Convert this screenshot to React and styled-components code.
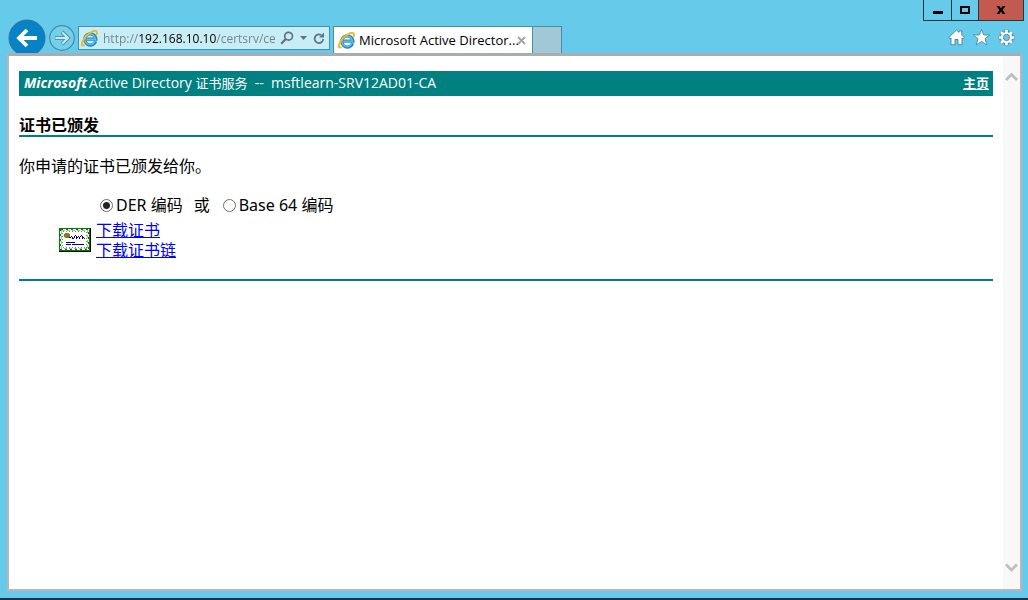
import React, { useState } from 'react';
import styled, { createGlobalStyle, ThemeProvider } from 'styled-components';

const theme = {
  colors: {
    chrome: '#66caea',
    chromeBorder: '#4590a4',
    field: '#c9edf7',
    frame: '#b9b5ba',
    teal: '#008080',
    link: '#0000ff',
    close: '#c35a50',
  },
  fonts: {
    page: '"Noto Sans", "Noto Sans CJK SC", sans-serif',
    ui: '"Open Sans", "Noto Sans CJK SC", sans-serif',
  },
};

const GlobalStyle = createGlobalStyle`
  * {
    box-sizing: border-box;
  }

  body {
    margin: 0;
    font-family: ${({ theme }) => theme.fonts.page};
    font-size: 16px;
    color: #000;
  }

  button {
    padding: 0;
    border: 0;
    background: none;
    font: inherit;
  }

  svg {
    display: block;
  }
`;

const Window = styled.div`
  display: flex;
  flex-direction: column;
  height: 100vh;
  background-color: ${({ theme }) => theme.colors.chrome};
  border-bottom: 2px solid #2b2d3c;
`;

const Header = styled.header`
  display: flex;
  justify-content: space-between;
  height: 53px;
  padding: 0 4px 0 8px;
`;

const NavBar = styled.div`
  display: flex;
  align-items: flex-start;
  padding-top: 26px;
`;

const BackButton = styled.button`
  width: 38px;
  height: 38px;
  margin-top: -7px;
`;

const ForwardButton = styled.button`
  width: 26px;
  height: 26px;
  margin: -1px 3px 0;
`;

const AddressBar = styled.form`
  display: flex;
  align-items: center;
  width: 252px;
  height: 24px;
  padding: 0 2px;
  border: 1px solid ${({ theme }) => theme.colors.chromeBorder};
  background-color: ${({ theme }) => theme.colors.field};
`;

/* the host part of the address is darker than the rest */
const UrlInput = styled.input`
  flex: 1;
  min-width: 0;
  height: 22px;
  margin: 0 4px 0 5px;
  padding: 0;
  border: 0;
  outline: 0;
  font-family: ${({ theme }) => theme.fonts.ui};
  font-size: 12px;
  color: transparent;
  background: linear-gradient(
    to right,
    #6f8289 35px,
    #000 35px,
    #000 113px,
    #6f8289 113px
  );
  background-clip: text;
  -webkit-background-clip: text;
`;

const FieldButton = styled.button`
  display: flex;
  align-items: center;
  justify-content: center;
  width: 16px;
  height: 22px;
`;

const Tab = styled.div`
  display: flex;
  align-items: center;
  width: 200px;
  height: 27px;
  margin-left: 3px;
  padding: 0 6px 0 4px;
  border: 1px solid ${({ theme }) => theme.colors.chromeBorder};
  border-bottom: 0;
  background-color: #fff;
`;

const TabTitle = styled.span`
  flex: 1;
  min-width: 0;
  margin-left: 4px;
  font-family: ${({ theme }) => theme.fonts.ui};
  font-size: 13px;
  white-space: nowrap;
`;

const NewTab = styled.button`
  width: 29px;
  height: 27px;
  border: 1px solid ${({ theme }) => theme.colors.chromeBorder};
  border-width: 1px 1px 0 0;
  background-color: #a1c8d5;
`;

const Tools = styled.div`
  display: flex;
  flex-direction: column;
  align-items: flex-end;
  gap: 8px;
`;

const WindowControls = styled.div`
  display: flex;
  height: 21px;
  border: 1px solid #23383f;
  border-top: 0;
`;

const WindowButton = styled.button`
  display: flex;
  align-items: center;
  justify-content: center;
  width: ${({ $close }) => ($close ? 45 : 27)}px;
  background-color: ${({ theme, $close }) => ($close ? theme.colors.close : 'transparent')};

  & + & {
    border-left: 1px solid #23383f;
  }
`;

const ToolIcons = styled.div`
  display: flex;
  gap: 8px;
  padding-right: 9px;
`;

const Frame = styled.div`
  display: flex;
  flex: 1;
  min-height: 0;
  margin: 0 6px 7px 7px;
  border: 2px solid ${({ theme }) => theme.colors.frame};
  border-top: 3px solid #a9adb3;
  background-color: #fff;
`;

const Page = styled.main`
  flex: 1;
  min-width: 0;
  padding: 15px 10px;
`;

const ScrollTrack = styled.div`
  display: flex;
  flex-direction: column;
  justify-content: space-between;
  width: 17px;
  padding: 16px 0;
  background-color: #f8f8f8;
`;

const ScrollButton = styled.button`
  display: flex;
  justify-content: center;
`;

const Banner = styled.div`
  display: flex;
  align-items: center;
  justify-content: space-between;
  height: 25px;
  padding: 0 4px 2px 5px;
  background-color: ${({ theme }) => theme.colors.teal};
  color: #fff;
  font-family: ${({ theme }) => theme.fonts.ui};
  font-size: 13px;
  white-space: pre;
`;

const Product = styled.span`
  font-size: 14px;
  line-height: 20px;
`;

const Brand = styled.b`
  margin-right: 2px;
  font-style: italic;
`;

const Service = styled.span`
  font-size: 13px;
`;

const HomeLink = styled.a`
  color: #fff;
  font-weight: bold;
`;

const Heading = styled.h1`
  margin: 19px 0 0;
  font-size: 16px;
  line-height: 20px;
`;

const Rule = styled.hr`
  height: 2px;
  margin: 0;
  border: 0;
  background-color: ${({ theme }) => theme.colors.teal};
`;

const Message = styled.p`
  margin: 19px 0;
  line-height: 20px;
`;

const Download = styled.div`
  display: grid;
  grid-template-columns: 32px 1fr;
  column-gap: 5px;
  row-gap: 5px;
  align-items: center;
  margin-bottom: 19px;
  padding-left: 40px;
`;

const Encoding = styled.div`
  display: flex;
  grid-column: 2;
  align-items: center;
  padding-left: 4px;
  line-height: 20px;
`;

const Option = styled.label`
  display: flex;
  align-items: center;
`;

const Radio = styled.input`
  appearance: none;
  width: 13px;
  height: 13px;
  margin: 0 3px 0 0;
  border: 1px solid #707070;
  border-radius: 50%;
  background-color: #fff;

  &:checked {
    background-image: radial-gradient(circle, #222 3px, transparent 4px);
  }
`;

const Or = styled.span`
  margin: 0 13px 0 11px;
`;

const Links = styled.div`
  display: flex;
  flex-direction: column;
  align-items: flex-start;
  line-height: 20px;
`;

const PageLink = styled.a`
  color: ${({ theme }) => theme.colors.link};
`;

const BackIcon = () => (
  <svg width="38" height="38" viewBox="0 0 38 38">
    <circle cx="19" cy="19" r="18" fill="#0683c6" stroke="#39728c" strokeWidth="1" />
    <path d="M29 19H11.5M19 11L11 19L19 27" fill="none" stroke="#fff" strokeWidth="3.8" />
  </svg>
);

const ForwardIcon = () => (
  <svg width="26" height="26" viewBox="0 0 26 26">
    <circle cx="13" cy="13" r="12.3" fill="#76cfea" stroke="#438da5" strokeWidth="1.2" />
    <path d="M6 13H19M13 7L19 13L13 19" fill="none" stroke="#4a97af" strokeWidth="4" />
    <path d="M6.5 13H19M13.4 7.5L18.9 13L13.4 18.5" fill="none" stroke="#c7eef8" strokeWidth="2" />
  </svg>
);

const BrowserLogo = () => (
  <svg width="17" height="17" viewBox="0 0 17 17">
    <path
      d="M14.6 11.3A5.6 5.6 0 1 1 14.9 9.1H5.5"
      fill="none"
      stroke="#2a86c0"
      strokeWidth="3.2"
    />
    <path
      d="M14 11.3A5.3 5.3 0 1 1 14.4 9.2H5.5"
      fill="none"
      stroke="#5dbdea"
      strokeWidth="1.5"
    />
    <path
      d="M3.6 15.2C-0.9 17.2 0.4 11.2 5.2 6C10 1 15.6-0.6 15.9 2.2C16 3.1 15.8 4 15.2 5"
      fill="none"
      stroke="#f0b91f"
      strokeWidth="1.9"
    />
  </svg>
);

const SearchIcon = () => (
  <svg width="14" height="14" viewBox="0 0 14 14">
    <circle cx="8.6" cy="5.2" r="3.9" fill="none" stroke="#5e757e" strokeWidth="1.7" />
    <path d="M5.8 8L1.2 12.8" stroke="#5e757e" strokeWidth="2.2" />
  </svg>
);

const CaretIcon = () => (
  <svg width="7" height="4" viewBox="0 0 7 4">
    <path d="M0 0H7L3.5 4Z" fill="#5e757e" />
  </svg>
);

const ReloadIcon = () => (
  <svg width="12" height="13" viewBox="0 0 12 13">
    <path d="M8.2 3.1A4.3 4.3 0 1 0 10.2 7" fill="none" stroke="#5e757e" strokeWidth="1.8" />
    <path d="M6 5.5H11V0.5Z" fill="#5e757e" />
  </svg>
);

const TabCloseIcon = () => (
  <svg width="9" height="9" viewBox="0 0 9 9">
    <path d="M1 1L8 8M8 1L1 8" stroke="#a6a6a6" strokeWidth="2" />
  </svg>
);

const MinimizeIcon = () => (
  <svg width="10" height="9" viewBox="0 0 10 9">
    <path d="M0 5H10V8H0Z" />
  </svg>
);

const MaximizeIcon = () => (
  <svg width="10" height="8" viewBox="0 0 10 8">
    <path d="M1 1H9V7H1Z" fill="none" stroke="#000" strokeWidth="2" />
  </svg>
);

const CloseIcon = () => (
  <svg width="10" height="8" viewBox="0 0 10 8">
    <path d="M0.5 0H3.4L5 2.4L6.6 0H9.5L6.6 4L9.5 8H6.6L5 5.6L3.4 8H0.5L3.4 4Z" />
  </svg>
);

const HomeIcon = () => (
  <svg width="17" height="17" viewBox="0 0 17 17">
    <path
      d="M8.5 1L11 3.4V2H13.8V6.1L16.2 8.5L14.9 9.7L14 9V15.8H10V10.5H7V15.8H3V9L2.1 9.7L0.8 8.5Z"
      fill="#fff"
      stroke="#447f93"
      strokeWidth="0.9"
    />
  </svg>
);

const StarIcon = () => (
  <svg width="17" height="17" viewBox="0 0 17 17">
    <path
      d="M8.5 0.6L10.7 6H16.6L12 9.7L13.8 15.9L8.5 12.4L3.2 15.9L5 9.7L0.4 6H6.3Z"
      fill="#fff"
      stroke="#447f93"
      strokeWidth="0.8"
    />
  </svg>
);

const GearIcon = () => (
  <svg width="17" height="17" viewBox="0 0 17 17">
    <g stroke="#447f93" strokeWidth="4">
      <path d="M8.5 0.5V16.5M0.5 8.5H16.5M2.8 2.8L14.2 14.2M14.2 2.8L2.8 14.2" />
    </g>
    <circle cx="8.5" cy="8.5" r="4.7" fill="none" stroke="#447f93" strokeWidth="3.6" />
    <g stroke="#fff" strokeWidth="2.6">
      <path d="M8.5 0.8V16.2M0.8 8.5H16.2M3 3L14 14M14 3L3 14" />
    </g>
    <circle cx="8.5" cy="8.5" r="4.4" fill="#66caea" stroke="#fff" strokeWidth="2.4" />
    <circle cx="8.5" cy="8.5" r="3.1" fill="none" stroke="#447f93" strokeWidth="0.8" />
  </svg>
);

const ChevronIcon = ({ down }) => (
  <svg width="13" height="10" viewBox="0 0 13 10">
    <path
      d={down ? 'M1 1.5L6.5 7L12 1.5' : 'M1 8L6.5 2.5L12 8'}
      fill="none"
      stroke="#bfbfbf"
      strokeWidth="2.8"
    />
  </svg>
);

const CertificateIcon = () => (
  <svg width="32" height="24" viewBox="0 0 32 24" shapeRendering="crispEdges">
    <path d="M0 0H32V24H0Z" />
    <path d="M0 0H31V23H0Z" fill="#008000" />
    <path d="M1 1H30V22H1Z" fill="#fff" />
    <path d="M1.5 1.5H29.5V21.5H1.5Z" fill="none" stroke="#008000" strokeDasharray="2 3" />
    <path d="M2.5 2.5H28.5V20.5H2.5Z" fill="none" stroke="#a8b8a8" strokeDasharray="3 2" />
    <path d="M3.5 3.5H27.5V19.5H3.5Z" fill="none" stroke="#808080" strokeDasharray="1 2" />
    <path
      d="M13 5.5H27M12 8.5H26M6 12.5H26M6 18.5H26"
      fill="none"
      stroke="#ffff60"
      strokeDasharray="1 4"
    />
    <path d="M6 5H10V6H11V9H10V10H6V9H5V6H6Z" fill="#808000" />
    <path d="M7 6H9V7H7ZM6 8H8V9H6Z" fill="#808080" />
    <path
      d="M10 9h2v1h-2zM12 8h1v1h-1zM13 9h1v2h-1zM14 10h1v1h-1zM15 8h1v2h-1zM16 7h1v1h-1zM17 8h1v3h-1zM18 9h1v1h-1zM19 8h1v1h-1zM20 9h1v2h-1zM21 8h1v1h-1zM22 7h1v1h-1zM23 8h1v3h-1zM24 9h1v1h-1zM25 10h1v1h-1z"
      fill="#000080"
    />
    <path d="M7 14H16V15H7ZM7 16H12V17H7ZM13 16H25V17H13Z" fill="#0000a0" />
  </svg>
);

const App = () => {
  const [encoding, setEncoding] = useState('der');
  const [url, setUrl] = useState('http://192.168.10.10/certsrv/certfnsh.asp');

  return (
    <ThemeProvider theme={theme}>
      <GlobalStyle />
      <Window>
        <Header>
          <NavBar>
            <BackButton aria-label="后退"><BackIcon /></BackButton>
            <ForwardButton aria-label="前进"><ForwardIcon /></ForwardButton>
            <AddressBar onSubmit={e => e.preventDefault()}>
              <BrowserLogo />
              <UrlInput
                aria-label="地址"
                spellCheck={false}
                value={url}
                onChange={e => setUrl(e.target.value)}
              />
              <FieldButton type="button" aria-label="搜索"><SearchIcon /></FieldButton>
              <FieldButton type="button" aria-label="历史"><CaretIcon /></FieldButton>
              <FieldButton type="submit" aria-label="刷新"><ReloadIcon /></FieldButton>
            </AddressBar>
            <Tab>
              <BrowserLogo />
              <TabTitle>Microsoft Active Director...</TabTitle>
              <button aria-label="关闭选项卡"><TabCloseIcon /></button>
            </Tab>
            <NewTab aria-label="新建选项卡" />
          </NavBar>
          <Tools>
            <WindowControls>
              <WindowButton aria-label="最小化"><MinimizeIcon /></WindowButton>
              <WindowButton aria-label="最大化"><MaximizeIcon /></WindowButton>
              <WindowButton $close aria-label="关闭"><CloseIcon /></WindowButton>
            </WindowControls>
            <ToolIcons>
              <button aria-label="主页"><HomeIcon /></button>
              <button aria-label="收藏夹"><StarIcon /></button>
              <button aria-label="工具"><GearIcon /></button>
            </ToolIcons>
          </Tools>
        </Header>
        <Frame>
          <Page>
            <Banner>
              <Product>
                <Brand>Microsoft</Brand>
                {'Active Directory '}
                <Service>证书服务</Service>
                {'  --  msftlearn-SRV12AD01-CA'}
              </Product>
              <HomeLink href="#home">主页</HomeLink>
            </Banner>
            <Heading>证书已颁发</Heading>
            <Rule />
            <Message>你申请的证书已颁发给你。</Message>
            <Download>
              <Encoding>
                <Option>
                  <Radio
                    type="radio"
                    name="encoding"
                    checked={encoding === 'der'}
                    onChange={() => setEncoding('der')}
                  />
                  DER 编码
                </Option>
                <Or>或</Or>
                <Option>
                  <Radio
                    type="radio"
                    name="encoding"
                    checked={encoding === 'base64'}
                    onChange={() => setEncoding('base64')}
                  />
                  Base 64 编码
                </Option>
              </Encoding>
              <CertificateIcon />
              <Links>
                <PageLink href="#cert">下载证书</PageLink>
                <PageLink href="#chain">下载证书链</PageLink>
              </Links>
            </Download>
            <Rule />
          </Page>
          <ScrollTrack>
            <ScrollButton aria-label="向上滚动"><ChevronIcon /></ScrollButton>
            <ScrollButton aria-label="向下滚动"><ChevronIcon down /></ScrollButton>
          </ScrollTrack>
        </Frame>
      </Window>
    </ThemeProvider>
  );
};

export default App;
